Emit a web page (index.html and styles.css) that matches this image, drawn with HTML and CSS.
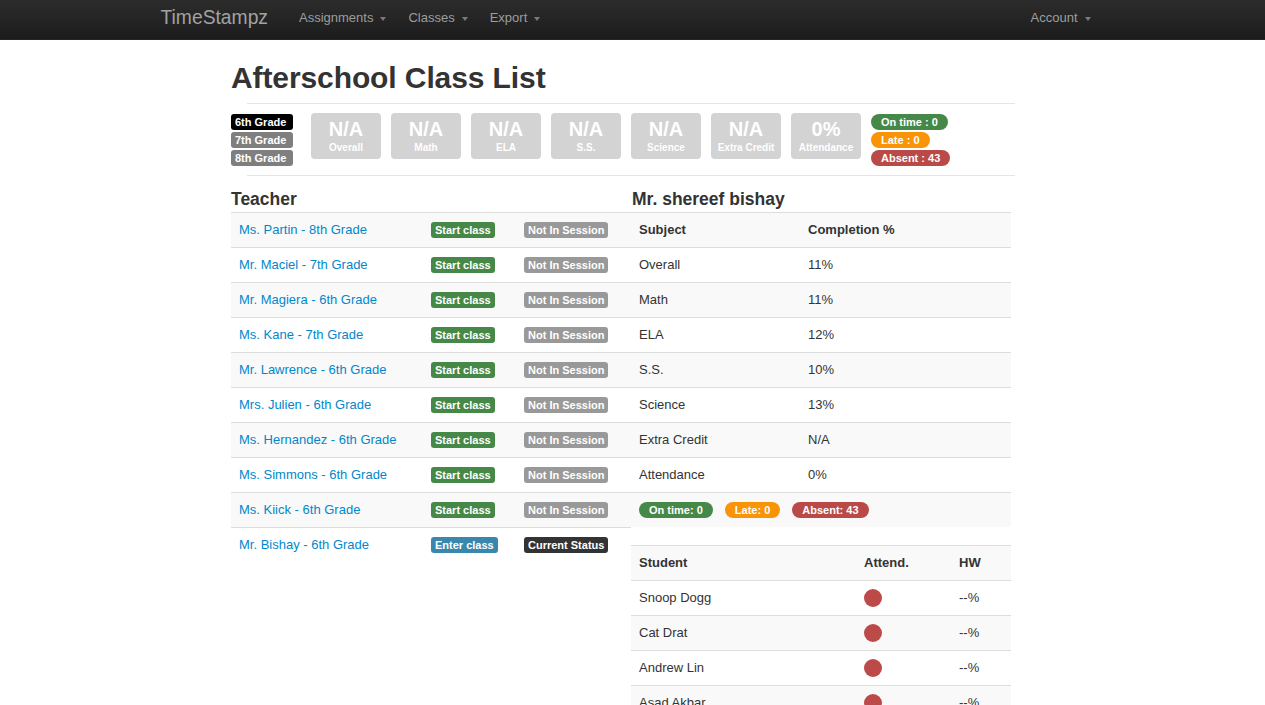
FILE: index.html
```html
<!DOCTYPE html>
<html>
<head>
<meta charset="utf-8">
<title>TimeStampz</title>
<link rel="stylesheet" href="styles.css">
</head>
<body>
<div class="navbar">
  <div class="nav-inner">
    <span class="brand">TimeStampz</span>
    <span class="nav-item">Assignments<b class="caret"></b></span>
    <span class="nav-item">Classes<b class="caret"></b></span>
    <span class="nav-item">Export<b class="caret"></b></span>
    <span class="nav-item nav-right">Account<b class="caret"></b></span>
  </div>
</div>

<div class="container">
  <div class="page">
    <h1 class="title">Afterschool Class List</h1>
    <hr class="rule">
    <div class="stats">
      <div class="grades">
        <span class="glabel g-active">6th Grade</span>
        <span class="glabel">7th Grade</span>
        <span class="glabel">8th Grade</span>
      </div>
      <div class="boxes">
        <div class="box"><div class="big">N/A</div><div class="small">Overall</div></div>
        <div class="box"><div class="big">N/A</div><div class="small">Math</div></div>
        <div class="box"><div class="big">N/A</div><div class="small">ELA</div></div>
        <div class="box"><div class="big">N/A</div><div class="small">S.S.</div></div>
        <div class="box"><div class="big">N/A</div><div class="small">Science</div></div>
        <div class="box"><div class="big">N/A</div><div class="small">Extra Credit</div></div>
        <div class="box"><div class="big">0%</div><div class="small">Attendance</div></div>
      </div>
      <div class="pills">
        <span class="pill green">On time : 0</span>
        <span class="pill orange">Late : 0</span>
        <span class="pill red">Absent : 43</span>
      </div>
    </div>
    <hr class="rule rule2">

    <div class="cols">
      <div class="left">
        <h3 class="heading">Teacher</h3>
        <table class="tbl teachers">
          <tr><td class="c1"><a>Ms. Partin - 8th Grade</a></td><td class="c2"><span class="lbl green">Start class</span></td><td><span class="lbl gray">Not In Session</span></td></tr>
          <tr><td class="c1"><a>Mr. Maciel - 7th Grade</a></td><td class="c2"><span class="lbl green">Start class</span></td><td><span class="lbl gray">Not In Session</span></td></tr>
          <tr><td class="c1"><a>Mr. Magiera - 6th Grade</a></td><td class="c2"><span class="lbl green">Start class</span></td><td><span class="lbl gray">Not In Session</span></td></tr>
          <tr><td class="c1"><a>Ms. Kane - 7th Grade</a></td><td class="c2"><span class="lbl green">Start class</span></td><td><span class="lbl gray">Not In Session</span></td></tr>
          <tr><td class="c1"><a>Mr. Lawrence - 6th Grade</a></td><td class="c2"><span class="lbl green">Start class</span></td><td><span class="lbl gray">Not In Session</span></td></tr>
          <tr><td class="c1"><a>Mrs. Julien - 6th Grade</a></td><td class="c2"><span class="lbl green">Start class</span></td><td><span class="lbl gray">Not In Session</span></td></tr>
          <tr><td class="c1"><a>Ms. Hernandez - 6th Grade</a></td><td class="c2"><span class="lbl green">Start class</span></td><td><span class="lbl gray">Not In Session</span></td></tr>
          <tr><td class="c1"><a>Ms. Simmons - 6th Grade</a></td><td class="c2"><span class="lbl green">Start class</span></td><td><span class="lbl gray">Not In Session</span></td></tr>
          <tr><td class="c1"><a>Ms. Kiick - 6th Grade</a></td><td class="c2"><span class="lbl green">Start class</span></td><td><span class="lbl gray">Not In Session</span></td></tr>
          <tr><td class="c1"><a>Mr. Bishay - 6th Grade</a></td><td class="c2"><span class="lbl blue">Enter class</span></td><td><span class="lbl dark">Current Status</span></td></tr>
        </table>
      </div>
      <div class="right">
        <h3 class="heading heading-r">Mr. shereef bishay</h3>
        <table class="tbl subjects">
          <tr class="head"><td class="s1">Subject</td><td>Completion %</td></tr>
          <tr><td class="s1">Overall</td><td>11%</td></tr>
          <tr><td class="s1">Math</td><td>11%</td></tr>
          <tr><td class="s1">ELA</td><td>12%</td></tr>
          <tr><td class="s1">S.S.</td><td>10%</td></tr>
          <tr><td class="s1">Science</td><td>13%</td></tr>
          <tr><td class="s1">Extra Credit</td><td>N/A</td></tr>
          <tr><td class="s1">Attendance</td><td>0%</td></tr>
          <tr><td colspan="2"><div class="badges"><span class="pill green">On time: 0</span><span class="pill orange">Late: 0</span><span class="pill red">Absent: 43</span></div></td></tr>
        </table>
        <table class="tbl students">
          <tr class="head"><td class="t1">Student</td><td class="t2">Attend.</td><td>HW</td></tr>
          <tr><td class="t1">Snoop Dogg</td><td class="t2"><span class="dot"></span></td><td>--%</td></tr>
          <tr><td class="t1">Cat Drat</td><td class="t2"><span class="dot"></span></td><td>--%</td></tr>
          <tr><td class="t1">Andrew Lin</td><td class="t2"><span class="dot"></span></td><td>--%</td></tr>
          <tr><td class="t1">Asad Akbar</td><td class="t2"><span class="dot"></span></td><td>--%</td></tr>
        </table>
      </div>
    </div>
  </div>
</div>
</body>
</html>
```

FILE: styles.css
```css
html, body {
  margin: 0;
  padding: 0;
  background: #fff;
  font-family: "Liberation Sans", Helvetica, Arial, sans-serif;
  color: #333;
  font-size: 13px;
  overflow: hidden;
}

.navbar {
  height: 40px;
  background: linear-gradient(to bottom, #2c2c2c, #1c1c1c);
  border-bottom: 1px solid #252525;
  box-sizing: border-box;
}
.nav-inner {
  width: 940px;
  margin: 0 auto;
  height: 39px;
  display: flex;
  align-items: center;
}
.brand {
  font-size: 19.3px;
  color: #a2a2a2;
  margin-left: -2px;
  margin-right: 31px;
  margin-top: -4px;
}
.nav-item {
  color: #9d9d9d;
  font-size: 13px;
  display: flex;
  align-items: center;
  margin-right: 22px;
  margin-top: -4px;
}
.nav-right {
  margin-left: auto;
  margin-right: 12px;
}
.caret {
  display: inline-block;
  width: 0;
  height: 0;
  border-left: 3.5px solid transparent;
  border-right: 3.5px solid transparent;
  border-top: 4px solid #7a7a7a;
  margin-left: 7px;
  margin-top: 2px;
}

.container {
  width: 941px;
  margin: 0 auto;
}
.page {
  margin-left: 69px;
  width: 784px;
}
.title {
  font-size: 30px;
  line-height: 36px;
  font-weight: bold;
  margin: 20px 0 0 0;
  color: #333;
  letter-spacing: -0.1px;
}
.rule {
  border: 0;
  border-top: 1px solid #e5e5e5;
  margin: 7px 0 0 16px;
  height: 0;
}
.rule2 {
  margin-top: 7px;
}

.stats {
  display: flex;
  align-items: flex-start;
  margin-top: 9px;
}
.grades {
  display: flex;
  flex-direction: column;
  width: 62px;
  margin-top: 1px;
}
.glabel {
  display: block;
  height: 16px;
  line-height: 16px;
  margin-bottom: 2px;
  background: #7f7f7f;
  color: #fff;
  font-size: 11px;
  font-weight: bold;
  border-radius: 3px;
  padding: 0 4px;
  width: 54px;
}
.g-active {
  background: #000;
}
.boxes {
  display: flex;
  gap: 10px;
  margin-left: 18px;
}
.box {
  width: 70px;
  height: 46px;
  background: #d3d3d3;
  border-radius: 4px;
  color: #fff;
  text-align: center;
  font-weight: bold;
  box-sizing: border-box;
  padding-top: 5px;
}
.big {
  font-size: 20px;
  line-height: 22px;
}
.small {
  font-size: 10px;
  line-height: 14px;
  margin-top: 1px;
  white-space: nowrap;
}
.pills {
  display: flex;
  flex-direction: column;
  align-items: flex-start;
  margin-left: 10px;
  margin-top: 1px;
}
.pill {
  display: inline-block;
  height: 16px;
  line-height: 16px;
  font-size: 11px;
  font-weight: bold;
  color: #fff;
  border-radius: 9px;
  padding: 0 10px;
  margin-bottom: 2px;
  white-space: nowrap;
}
.green { background: #468847; }
.orange { background: #f89406; }
.red { background: #b94a48; }
.blue { background: #3a87ad; }
.gray { background: #999; }
.dark { background: #333; }

.cols {
  display: flex;
  margin-top: 13px;
}
.left {
  width: 400px;
}
.right {
  width: 380px;
}
.heading {
  font-size: 17.5px;
  line-height: 20px;
  font-weight: bold;
  margin: 0 0 3px 0;
  color: #333;
}
.heading-r {
  margin-left: 1px;
}

.tbl {
  border-collapse: collapse;
  width: 100%;
}
.tbl td {
  border-top: 1px solid #ddd;
  padding: 8px;
  line-height: 18px;
  height: 18px;
  vertical-align: top;
  text-align: left;
  font-size: 13px;
}
.tbl tr:nth-child(odd) td {
  background: #f9f9f9;
}
.tbl a {
  color: #0088cc;
  text-decoration: none;
}
.teachers .c1 { width: 176px; }
.teachers .c2 { width: 77px; }
.lbl {
  display: inline-block;
  height: 16px;
  line-height: 16px;
  font-size: 11px;
  font-weight: bold;
  color: #fff;
  padding: 0 4px;
  border-radius: 3px;
  vertical-align: top;
  margin-top: 1px;
  white-space: nowrap;
}
.subjects .s1 { width: 153px; }
.head td { font-weight: bold; }
.badges {
  display: flex;
  gap: 12px;
  margin-top: 1px;
}
.badges .pill {
  padding: 0 10px;
  margin: 0;
}
.students {
  margin-top: 18px;
}
.students .t1 { width: 209px; }
.students .t2 { width: 79px; }
.dot {
  display: inline-block;
  width: 18px;
  height: 18px;
  border-radius: 50%;
  background: #bb4a48;
  vertical-align: top;
}
```
